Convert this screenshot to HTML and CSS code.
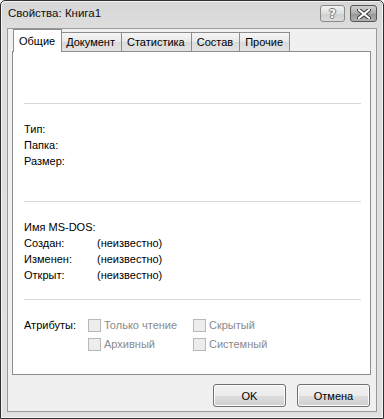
FILE: index.html
```html
<!DOCTYPE html>
<html lang="ru">
<head>
    <meta charset="UTF-8">
    <title>Свойства: Книга1</title>
    <link rel="stylesheet" href="styles.css">
</head>
<body>
    <div class="window">
        <header class="titlebar">
            <span class="title">Свойства: Книга1</span>
            <div class="caption-buttons">
                <button class="cap-btn help-btn">?</button>
                <button class="cap-btn close-btn">
                    <svg width="14" height="10" viewBox="0 0 14 10">
                        <path d="M2 1 L12 9 M12 1 L2 9" stroke="#3a3a3a" stroke-width="4" stroke-linecap="square"/>
                        <path d="M2 1 L12 9 M12 1 L2 9" stroke="#fff" stroke-width="2" stroke-linecap="square"/>
                    </svg>
                </button>
            </div>
        </header>

        <main class="client">
            <nav class="tabs">
                <div class="tab active">Общие</div>
                <div class="tab">Документ</div>
                <div class="tab">Статистика</div>
                <div class="tab">Состав</div>
                <div class="tab">Прочие</div>
            </nav>

            <section class="panel">
                <div class="icon-area"></div>
                <hr class="sep">

                <div class="info first">
                    <span>Тип:</span><span></span>
                    <span>Папка:</span><span></span>
                    <span>Размер:</span><span></span>
                </div>
                <hr class="sep">

                <div class="info second">
                    <span>Имя MS-DOS:</span><span></span>
                    <span>Создан:</span><span>(неизвестно)</span>
                    <span>Изменен:</span><span>(неизвестно)</span>
                    <span>Открыт:</span><span>(неизвестно)</span>
                </div>
                <hr class="sep">

                <div class="attrs">
                    <span class="attrs-label">Атрибуты:</span>
                    <label class="check"><span class="box"></span>Только чтение</label>
                    <label class="check"><span class="box"></span>Скрытый</label>
                    <label class="check"><span class="box"></span>Архивный</label>
                    <label class="check"><span class="box"></span>Системный</label>
                </div>
            </section>

            <footer class="actions">
                <button class="btn">OK</button>
                <button class="btn">Отмена</button>
            </footer>
        </main>
    </div>
</body>
</html>
```

FILE: styles.css
```css
* {
    margin: 0;
    padding: 0;
    box-sizing: border-box;
}

body {
    width: 384px;
    height: 419px;
    background: #fff;
    font-family: 'Liberation Sans', Arial, sans-serif;
    font-size: 11px;
    color: #000;
}

.window {
    width: 384px;
    height: 419px;
    border: 1px solid #2e2e2e;
    border-radius: 5px 5px 0 0;
    background: linear-gradient(#d6d6d6, #dedede 30px, #e0e0e0);
    display: flex;
    flex-direction: column;
    box-shadow: inset 1px 1px 0 #f4f4f4, inset -1px -1px 0 #f4f4f4;
}

/* title bar */
.titlebar {
    height: 27px;
    display: flex;
    align-items: flex-start;
    justify-content: space-between;
    padding: 4px 6px 0 7px;
}

.title {
    font-size: 11.5px;
    line-height: 17px;
    color: #111;
}

.caption-buttons {
    display: flex;
    gap: 5px;
}

.cap-btn {
    height: 17px;
    border: 1px solid #8a8a8a;
    border-radius: 3px;
    display: flex;
    align-items: center;
    justify-content: center;
}

.help-btn {
    width: 25px;
    background: linear-gradient(#f2f2f2, #dedede 50%, #cfcfcf 51%, #dcdcdc);
    color: #fafafa;
    font-family: 'DejaVu Sans', sans-serif;
    font-weight: bold;
    font-size: 12px;
    text-shadow: 1px 0 0 #777, -1px 0 0 #777, 0 1px 0 #777, 0 -1px 0 #777;
}

.close-btn {
    width: 27px;
    background: linear-gradient(#cfcfcf, #acacac 50%, #959595 51%, #b0b0b0);
    border-color: #555;
}

/* client area */
.client {
    flex: 1;
    margin: 0 6px 6px 6px;
    background: #f0f0f0;
    border: 1px solid #9a9a9a;
    display: flex;
    flex-direction: column;
    padding: 0 5px 0 4px;
}

.tabs {
    display: flex;
    height: 22px;
    align-items: flex-end;
    padding-left: 3px;
    position: relative;
    z-index: 1;
}

.tab {
    height: 19px;
    padding: 0 6px 0 5px;
    line-height: 18px;
    border: 1px solid #8c8c8c;
    border-bottom: none;
    margin-left: -1px;
    background: linear-gradient(#f6f6f6, #e8e8e8 50%, #dadada 51%, #e4e4e4);
}

.tab.active {
    height: 23px;
    margin-bottom: -1px;
    padding: 2px 6px 0 5px;
    margin-right: -2px;
    margin-left: -2px;
    background: #fff;
    z-index: 2;
}

.tab.active + .tab {
    margin-left: 0;
}

.panel {
    height: 324px;
    background: #fff;
    border: 1px solid #8c8c8c;
    padding: 0 9px 0 11px;
    display: flex;
    flex-direction: column;
}

.icon-area {
    height: 51px;
}

.sep {
    border: none;
    border-top: 1px solid #d8d8d8;
}

.info {
    display: grid;
    grid-template-columns: 73px 1fr;
    grid-auto-rows: 16px;
    line-height: 16px;
}

.info.first {
    margin: 17px 0 32px;
}

.info.second {
    margin: 17px 0 16px;
}

.attrs {
    display: grid;
    grid-template-columns: 64px 105px 1fr;
    grid-auto-rows: 19px;
    margin-top: 16px;
    line-height: 19px;
}

.attrs-label {
    grid-row: 1;
}

.check {
    display: flex;
    align-items: center;
    gap: 3px;
    color: #8a8a8a;
}

.check:nth-of-type(1) { grid-column: 2; grid-row: 1; }
.check:nth-of-type(2) { grid-column: 3; grid-row: 1; }
.check:nth-of-type(3) { grid-column: 2; grid-row: 2; }
.check:nth-of-type(4) { grid-column: 3; grid-row: 2; }

.box {
    width: 13px;
    height: 13px;
    border: 1px solid #b8b8b8;
    background: #ededed;
}

/* dialog buttons */
.actions {
    flex: 1;
    display: flex;
    justify-content: flex-end;
    align-items: flex-start;
    gap: 11px;
    padding-top: 9px;
    padding-right: 1px;
}

.btn {
    width: 73px;
    height: 23px;
    border: 1px solid #707070;
    border-radius: 3px;
    background: linear-gradient(#f2f2f2, #ebebeb 50%, #dddddd 51%, #cfcfcf);
    font-family: 'Liberation Sans', Arial, sans-serif;
    font-size: 11px;
    color: #000;
    box-shadow: inset 0 0 0 1px #fcfcfc;
}
```
